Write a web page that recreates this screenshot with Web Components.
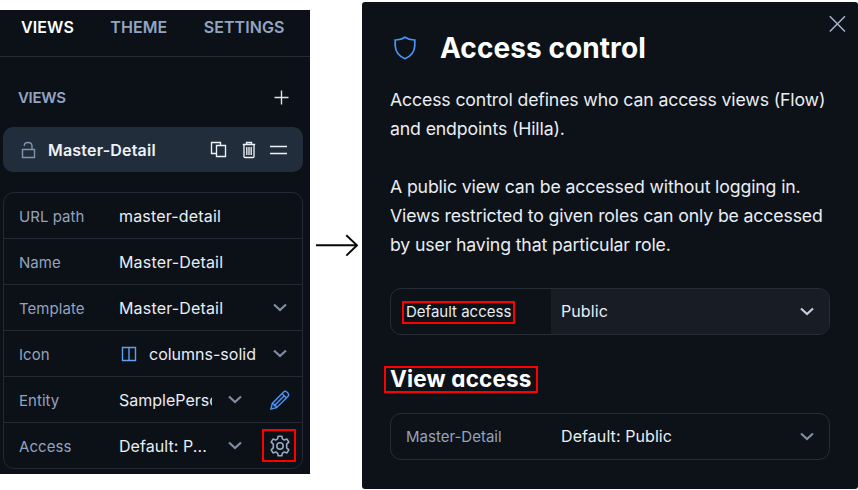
<!DOCTYPE html>
<html lang="en">
<head>
<meta charset="utf-8">
<title>Access control</title>
<style>
body{margin:0;background:#fff;font-family:Inter,"Liberation Sans",sans-serif;overflow:hidden}
</style>
</head>
<body>
<app-stage></app-stage>
<script>
const define=(name,css,html)=>customElements.define(name,class extends HTMLElement{
  constructor(){super();this.attachShadow({mode:'open'}).innerHTML=`<style>*{box-sizing:border-box}${css}</style>${html}`;}
});

const ICONS={
  plus:[16,16,'<path d="M8.5 .5v14M1.5 7.5h14" stroke-width="1.4"/>'],
  lock:[16,18,'<path d="M2.5 8.5h12v8h-12zM4.3 5V4.2Q4.5 1.5 8.2 1.5T12 5.2v3" stroke-width="1.4"/>'],
  copy:[18,18,'<path d="M6.5 4.5h9v11h-9zM6 12.5H1.5v-11h9v3" stroke-width="1.35"/>'],
  trash:[14,18,'<path d="M.8 3.5h12.4M4.5 3.2V1.5h5v1.7M2 3.8v11.7q0 1 1 1h8q1 0 1-1V3.8M4.8 6v8M7 6v8M9.2 6v8" stroke-width="1.35"/>'],
  drag:[18,12,'<path d="M1 2.5h17M1 9.5h17" stroke-width="1.4"/>'],
  chevron:[14,9,'<path d="M1 1.5l6 5.5 6-5.5" stroke-width="2.2"/>'],
  columns:[16,16,'<path d="M1.5 1.5h13v13h-13zM8 1.5v13" stroke-width="1.4"/>'],
  pencil:[20,20,'<path d="M1 19l1.3-5.6L13.6 2.1q1.6-1.6 3.4.1l.8.8q1.7 1.8.1 3.4L6.6 17.7zM12.1 3.6l4.3 4.3M2.3 13.4q2 .1 2.1 2.1 2 .1 2.2 2.2M14 6L4.5 15.5" stroke-width="1.45"/>'],
  gear:[20,22,'<path d="M8.2 1.2h3.6l.6 2.7 1.9 1.1 2.7-.9 1.8 3.1-2.1 1.9v3.8l2.1 1.9-1.8 3.1-2.7-.9-1.9 1.1-.6 2.7H8.2l-.6-2.7L5.7 17l-2.7.9-1.8-3.1 2.1-1.9V9.1L1.2 7.2 3 4.1l2.7.9 1.9-1.1z" stroke-width="1.6" stroke-linejoin="round"/><circle cx="10" cy="11" r="3.2" stroke-width="1.5"/>'],
  shield:[22,24,'<path d="M11 1.2Q6.6 4.1 1.2 4v5.5Q1.6 18.8 11 22.7q9.4-3.9 9.8-13.2V4Q15.4 4.1 11 1.2z" stroke-width="1.7"/>'],
  close:[18,18,'<path d="M1.8 1.3l15.2 15.2M17 1.3L1.8 16.5" stroke-width="1.5"/>'],
  arrow:[42,24,'<path d="M0 12.3h41" stroke-width="1.9"/><path d="M30.3 2.2L41 12.3 30.3 22.6" stroke-width="1.9"/>']
};
customElements.define('ui-icon',class extends HTMLElement{
  constructor(){
    super();
    const [w,h,d]=ICONS[this.getAttribute('name')];
    this.attachShadow({mode:'open'}).innerHTML=`<style>:host{display:block;flex:none;width:${w}px;height:${h}px}svg{display:block}</style><svg width="${w}" height="${h}" viewBox="0 0 ${w} ${h}" fill="none" stroke="currentColor">${d}</svg>`;
  }
});

define('mark-box',`:host{display:block;position:absolute;border:2px solid #f00;box-sizing:border-box}`,'');

define('panel-tabs',`:host{display:flex;height:47px;padding:7px 0 0 21px;gap:36.3px;border-bottom:1px solid #262c37;box-sizing:border-box;font-size:16px;font-weight:600;line-height:20px;color:#94a5c2;letter-spacing:.1px}
b{font-weight:600;color:#fff}`,`<b>VIEWS</b><span>THEME</span><span>SETTINGS</span>`);

define('view-card',`:host{display:flex;align-items:center;height:45px;margin:0 7px 0 3px;padding:0 16px 0 17px;border-radius:10px;background:#222d3b;color:#eef2f8;box-sizing:border-box}
.n{font-size:16px;font-weight:600;flex:1;margin-left:12px;letter-spacing:.2px}
.l{color:#8092ae}.c{margin-right:14px}.t{margin-right:13px}`,
`<ui-icon class="l" name="lock"></ui-icon><span class="n"><slot></slot></span><ui-icon class="c" name="copy"></ui-icon><ui-icon class="t" name="trash"></ui-icon><ui-icon name="drag"></ui-icon>`);

define('field-row',`:host{display:flex;align-items:center;height:46px;padding:0 15.5px 0 15px;border-bottom:1px solid #242935;box-sizing:border-box;font-size:16px;color:#e9edf4}
:host(:last-child){border-bottom:0;height:45px}
.l{width:100px;font-size:15px;color:#93a3be;letter-spacing:.05px;padding-top:2px}
.v{flex:1;display:flex;align-items:center;gap:12px;min-width:0;white-space:nowrap;overflow:hidden;padding-top:1px;letter-spacing:var(--track,.17px)}
::slotted([slot=end]){color:#7f8da2}`,
`<span class="l"><slot name="label"></slot></span><span class="v"><slot></slot></span><slot name="end"></slot>`);

define('views-panel',`:host{display:block;height:464px;margin-top:10px;background:#0c1017;box-sizing:border-box}
header{display:flex;justify-content:space-between;align-items:center;height:70px;padding:11px 21px 0 18px;font-size:15px;font-weight:600;letter-spacing:-.3px;color:#94a5c2}
header ui-icon{color:#dce2eb}
.rows{margin:20px 7px 0 3px;border:1px solid #242935;border-radius:11px;height:277px}
.s{margin-right:28px}.clip{display:block;width:93px;overflow:hidden;white-space:nowrap}.blue{color:#609ef0}
.tight{--track:0px}`,
`<panel-tabs></panel-tabs><header><span>VIEWS</span><ui-icon name="plus"></ui-icon></header>
<view-card>Master-Detail</view-card>
<div class="rows">
<field-row><span slot="label">URL path</span>master-detail</field-row>
<field-row><span slot="label">Name</span>Master-Detail</field-row>
<field-row><span slot="label">Template</span>Master-Detail<ui-icon slot="end" name="chevron"></ui-icon></field-row>
<field-row class="tight"><span slot="label">Icon</span><ui-icon class="blue" name="columns" style="margin-left:2px"></ui-icon><span>columns-solid</span><ui-icon slot="end" name="chevron"></ui-icon></field-row>
<field-row class="tight"><span slot="label">Entity</span><span class="clip" style="letter-spacing:0">SamplePerson</span><ui-icon class="s" slot="end" name="chevron"></ui-icon><ui-icon slot="end" name="pencil" style="color:#4a94f5;margin-right:-3.5px"></ui-icon></field-row>
<field-row style="--track:.07px"><span slot="label">Access</span>Default: P...<ui-icon class="s" slot="end" name="chevron"></ui-icon><ui-icon slot="end" name="gear" style="color:#98a9c4;margin-right:-3.5px"></ui-icon></field-row>
</div>`);

define('access-select',`:host{display:grid;grid-template-columns:160px 1fr;height:47px;border:1px solid #272c37;border-radius:11px;overflow:hidden;box-sizing:border-box;color:#e9edf4}
.l{display:flex;align-items:center;padding-left:15px;font-size:15px;color:var(--label,#93a3be)}
.v{display:flex;align-items:center;justify-content:space-between;padding:0 15.5px 1px 10px;font-size:16px;letter-spacing:.08px;background:var(--fill,transparent)}
ui-icon{color:var(--chev,#7f8da2)}`,
`<span class="l"><slot name="label"></slot></span><span class="v"><slot></slot><ui-icon name="chevron"></ui-icon></span>`);

define('access-dialog',`:host{display:block;position:relative;margin-top:2px;height:487px;padding:0 28px;background:#0d1218;border-radius:3px;box-sizing:border-box;color:#e9edf4}
h1,h2{margin:0;font-weight:700;color:#fff;font-feature-settings:"cv11" 1}
header{display:flex;align-items:center;padding:8px 0 0 4px;height:84px}
header ui-icon{color:#4a94f5;margin-right:24px}
h1{font-size:28px;line-height:32px;letter-spacing:.08px}
h2{font-size:22.5px;line-height:30px;letter-spacing:.17px;margin:29px 0 19px}
p{margin:0 0 29px;font-size:17.7px;line-height:28.8px;letter-spacing:-.14px;white-space:nowrap;height:58px}
p+p{height:86px;margin-bottom:29px}
.x{position:absolute;right:12px;top:13px;color:#a5b4cf}
.first{--label:#e9edf4;--fill:#181c25;--chev:#c3cddb}`,
`<ui-icon class="x" name="close"></ui-icon>
<header><ui-icon name="shield"></ui-icon><h1>Access control</h1></header>
<p>Access control defines who can access views (Flow)<br>and endpoints (Hilla).</p>
<p>A public view can be accessed without logging in.<br>Views restricted to given roles can only be accessed<br>by user having that particular role.</p>
<access-select class="first"><span slot="label">Default access</span>Public</access-select>
<h2>View access</h2>
<access-select><span slot="label">Master-Detail</span>Default: Public</access-select>`);

define('app-stage',`:host{display:grid;grid-template-columns:310px 52px 496px;height:490px;position:relative}
.mid{padding:233px 0 0 6px;color:#050805}`,
`<views-panel></views-panel><div class="mid"><ui-icon name="arrow"></ui-icon></div><access-dialog></access-dialog>
<mark-box style="left:262px;top:429px;width:34px;height:33px"></mark-box>
<mark-box style="left:402px;top:301px;width:113px;height:23px"></mark-box>
<mark-box style="left:384px;top:366px;width:154px;height:27px"></mark-box>`);
</script>
</body>
</html>
